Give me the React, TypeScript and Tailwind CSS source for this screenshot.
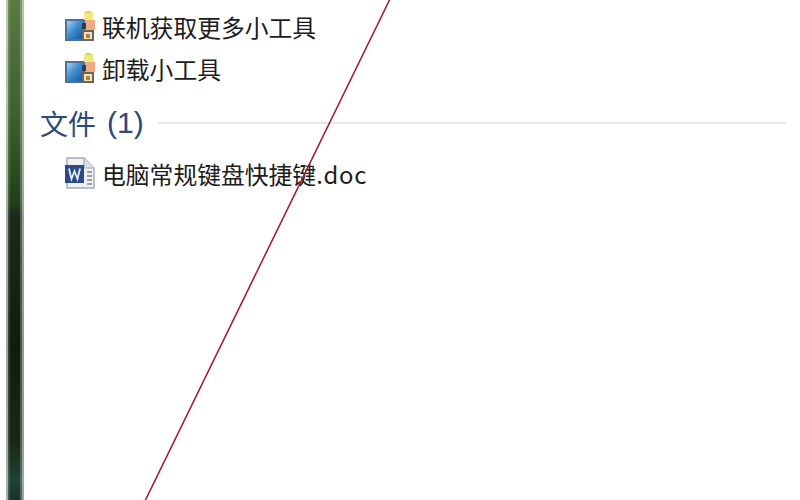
import React from "react";

const font = { fontFamily: '"Noto Sans CJK SC", "Liberation Sans", sans-serif' };

function GadgetIcon({ id }: { id: string }) {
  return (
    <svg width="32" height="32" viewBox="0 0 32 32" className="shrink-0">
      <defs>
        <linearGradient id={id} x1="0" y1="0" x2="1" y2="1">
          <stop offset="0" stopColor="#a9d3ee" />
          <stop offset="0.45" stopColor="#3f8fd0" />
          <stop offset="1" stopColor="#14579a" />
        </linearGradient>
      </defs>
      <rect x="1" y="8" width="20" height="22" fill="#4e6f9a" />
      <rect x="3" y="10" width="16" height="18" fill={`url(#${id})`} />
      <rect x="20" y="1" width="9" height="8" fill="#f1e684" />
      <rect x="22" y="0" width="5" height="2" fill="#dcd05a" />
      <rect x="21" y="9" width="10" height="10" fill="#f0ab83" />
      <rect x="18" y="12" width="4" height="6" fill="#2c3f57" />
      <rect x="18" y="19" width="12" height="11" fill="#6b655a" />
      <rect x="20" y="21" width="8" height="7" fill="#f3e3c2" />
      <rect x="22" y="23" width="4" height="4" fill="#b5803a" />
    </svg>
  );
}

function WordIcon() {
  return (
    <svg width="34" height="34" viewBox="0 0 34 34" className="shrink-0">
      <path d="M4 1H21L31 11V31H4Z" fill="#eef0f4" stroke="#a4abb6" strokeWidth="1.4" />
      <path d="M21 1V11H31" fill="#dde0e7" stroke="#a4abb6" strokeWidth="1.2" />
      <path d="M24 15H29M24 19H29M24 23H29M24 27H29" stroke="#7e8794" strokeWidth="1.6" />
      <rect x="2" y="8" width="19" height="18" fill="#2c4a8a" />
      <path d="M6 11.5L8.5 22L11.5 14L14.5 22L17 11.5" fill="none" stroke="#e6edf8" strokeWidth="1.8" />
    </svg>
  );
}

function Row({ icon, children }: { icon: React.ReactNode; children?: React.ReactNode }) {
  return (
    <div className="flex h-[42px] items-center pl-[39px] gap-[5px]">
      <span className="flex w-[34px] justify-center">{icon}</span>
      <span className="text-[23.8px] leading-none text-[#1c1c1c] whitespace-nowrap">{children}</span>
    </div>
  );
}

export default function App() {
  return (
    <div className="relative flex h-[500px] w-[800px] overflow-hidden bg-white" style={font}>
      <div className="flex h-full w-[24px] shrink-0">
        <div className="w-[6px] bg-white" />
        <div className="flex w-[18px] bg-[linear-gradient(to_bottom,#5a7a42_0px,#3d6330_110px,#1f4018_205px,#1b2a1d_215px,#111b11_350px,#17281a_440px,#1f4030_480px,#1c3328_500px)]">
          <div className="w-[2px] bg-white/60" />
          <div className="w-[2px] bg-white/15" />
          <div className="flex-1" />
          <div className="w-[2px] bg-white/25" />
          <div className="w-[2px] bg-white/55" />
        </div>
      </div>
      <div className="flex min-w-0 flex-1 flex-col">
        <div className="-mt-[36px]">
          <Row icon={<GadgetIcon id="g1" />} />
          <Row icon={<GadgetIcon id="g2" />}>联机获取更多小工具</Row>
          <Row icon={<GadgetIcon id="g3" />}>卸载小工具</Row>
        </div>
        <div className="mt-[9px] flex h-[48px] items-center pl-[16px] pr-[14px] text-[#2b4a7c]">
          <span className="text-[28px] leading-none whitespace-nowrap">文件</span>
          <span className="ml-[11px] text-[30px] leading-none whitespace-nowrap font-['Liberation_Sans',sans-serif]">(1)</span>
          <div className="ml-[14px] h-[1.5px] flex-1 bg-[#e3e6ea]" />
        </div>
        <div className="mt-[6px]">
          <Row icon={<WordIcon />}>
            电脑常规键盘快捷键<span className="tracking-[0.75px]">.doc</span>
          </Row>
        </div>
      </div>
      <svg className="absolute inset-0" width="800" height="500" viewBox="0 0 800 500">
        <line x1="390" y1="-1" x2="145" y2="501" stroke="#a3162f" strokeWidth="1.5" />
      </svg>
    </div>
  );
}
